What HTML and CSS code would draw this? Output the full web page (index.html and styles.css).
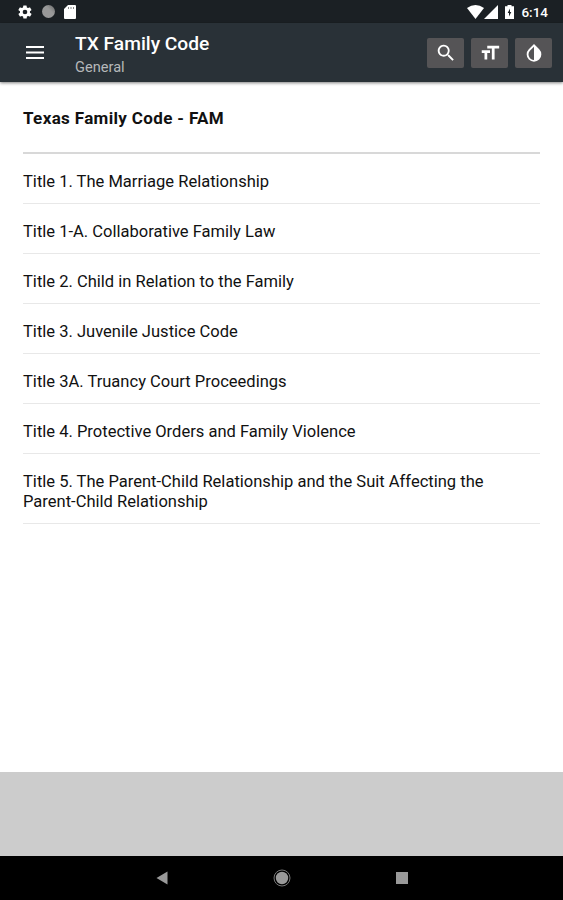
FILE: index.html
```
<!DOCTYPE html>
<html lang="en">
  <head>
    <meta charset="UTF-8" />
    <meta name="viewport" content="width=device-width, initial-scale=1.0" />
    <title>TX Family Code</title>
    <link rel="stylesheet" href="styles.css">
  </head>
  <body>
    <div class="status-bar">
      <div class="status-left">
        <svg width="16" height="16" viewBox="0 0 24 24"><path fill="#fff" fill-rule="evenodd" d="M19.4 13a7.500 7.500 0 0 0 0-2l2.100-1.600a.5.5 0 0 0 .1-.6l-2-3.500a.5.5 0 0 0-.6-.2l-2.500 1a7.300 7.300 0 0 0-1.700-1l-.4-2.600a.5.5 0 0 0-.5-.4h-4a.5.5 0 0 0-.5.4L9 5.100a7.700 7.700 0 0 0-1.700 1l-2.500-1a.5.5 0 0 0-.6.2l-2 3.500a.5.5 0 0 0 .1.600L4.500 11a8 8 0 0 0 0 2l-2.100 1.600a.5.5 0 0 0-.1.600l2 3.500c.1.200.4.300.6.200l2.500-1a7.300 7.300 0 0 0 1.700 1l.4 2.600c0 .3.200.4.500.4h4c.3 0 .5-.2.5-.4l.4-2.600a7.700 7.700 0 0 0 1.700-1l2.500 1c.2.100.5 0 .6-.2l2-3.500a.5.5 0 0 0-.1-.6zM12 15.500a3.500 3.500 0 1 1 0-7 3.500 3.500 0 0 1 0 7z"/></svg>
        <span class="sync-dot"></span>
        <svg width="12" height="14" viewBox="0 0 12 14"><path fill="#fff" d="M4 0h7a1 1 0 0 1 1 1v12a1 1 0 0 1-1 1H1a1 1 0 0 1-1-1V4z"/><path stroke="#888" d="M4.500 2v2M7 2v2M9.500 2v2"/></svg>
      </div>
      <div class="status-right">
        <svg width="17" height="14" viewBox="0 0 17 14"><path fill="#fff" d="M0 3Q8.500-3 17 3L8.500 14z"/></svg>
        <svg width="14" height="14" viewBox="0 0 14 14"><path fill="#fff" d="M14 0v14H0z"/></svg>
        <svg class="battery" width="9" height="14" viewBox="0 0 9 14"><path fill="#fff" d="M2.500 0h4v1.200H9V14H0V1.200h2.500z"/><path fill="#1b2024" d="M5 3.500L2.700 8H4v3.500L6.300 7H5z"/></svg>
        <span class="clock">6:14</span>
      </div>
    </div>

    <header class="toolbar">
      <button class="menu-button" aria-label="Menu"><svg width="18" height="13" viewBox="0 0 18 13"><path fill="#fff" d="M0 0h18v2H0zM0 5.500h18v2H0zM0 11h18v2H0z"/></svg></button>
      <div class="heading">
        <div class="app-title">TX Family Code</div>
        <div class="app-subtitle">General</div>
      </div>
      <div class="actions">
        <button class="action" aria-label="Search"><svg width="22" height="22" viewBox="0 0 24 24"><path fill="#fff" d="M15.500 14h-.8l-.3-.3A6.500 6.500 0 1 0 13.700 14.400l.3.300v.8l5 5 1.500-1.500zm-6 0a4.500 4.500 0 1 1 0-9 4.500 4.500 0 0 1 0 9z"/></svg></button>
        <button class="action" aria-label="Text size"><svg width="22" height="22" viewBox="0 0 24 24"><path fill="#fff" d="M9 4v3h5v12h3V7h5V4zM3 12h3v7h3v-7h3V9H3z"/></svg></button>
        <button class="action" aria-label="Invert colors"><svg width="22" height="22" viewBox="0 0 24 24"><path fill="#fff" d="M17.700 7.900L12 2.200 6.300 7.900a8 8 0 1 0 11.400 0zM12 19.600a6 6 0 0 1-4.200-10.200L12 5.100z"/></svg></button>
      </div>
    </header>

    <main class="content">
      <h1>Texas Family Code - FAM</h1>
      <ul class="titles">
        <li>Title 1. The Marriage Relationship</li>
        <li>Title 1-A. Collaborative Family Law</li>
        <li>Title 2. Child in Relation to the Family</li>
        <li>Title 3. Juvenile Justice Code</li>
        <li>Title 3A. Truancy Court Proceedings</li>
        <li>Title 4. Protective Orders and Family Violence</li>
        <li>Title 5. The Parent-Child Relationship and the Suit Affecting the <span class="nowrap">Parent-Child</span> Relationship</li>
      </ul>
    </main>

    <div class="ad-banner"></div>

    <nav class="nav-bar">
      <svg width="120" height="20" viewBox="0 0 120 20"><path fill="#999" d="M65.500 3.500v13L54.500 10z"/></svg>
      <svg width="120" height="20" viewBox="0 0 120 20"><circle cx="60" cy="10" r="8" fill="none" stroke="#777"/><circle cx="60" cy="10" r="6.200" fill="#999"/></svg>
      <svg width="120" height="20" viewBox="0 0 120 20"><path fill="#999" d="M54 4h12v12H54z"/></svg>
    </nav>
  </body>
</html>
```
FILE: styles.css
```
* {
  box-sizing: border-box;
}
body {
  margin: 0;
  height: 900px;
  display: flex;
  flex-direction: column;
  background: #fff;
  color: #111;
  font-family: Roboto, sans-serif;
}
svg {
  display: block;
}
button {
  border: 0;
  padding: 0;
  background: none;
}
.status-bar {
  height: 23px;
  padding: 0 15px 0 17px;
  display: flex;
  justify-content: space-between;
  background: #1b2024;
}
.status-left,
.status-right {
  display: flex;
  align-items: center;
}
.status-left {
  gap: 9px;
}
.sync-dot {
  width: 13px;
  height: 13px;
  border-radius: 50%;
  background: linear-gradient(45deg, #999 60%, #666);
}
.battery {
  margin-left: 7px;
}
.clock {
  margin-left: 7px;
  color: #fff;
  font-size: 13.5px;
  font-weight: 500;
}
.toolbar {
  height: 59px;
  padding: 0 11px 0 26px;
  display: flex;
  align-items: center;
  background: #293137;
  box-shadow: 0 1px 3px rgba(0, 0, 0, 0.5);
}
.heading {
  margin-left: 31px;
  padding-top: 5px;
  color: #fff;
}
.app-title {
  font-size: 19.2px;
  font-weight: 500;
  line-height: 24px;
}
.app-subtitle {
  color: #b5b8ba;
  font-size: 14.6px;
  line-height: 23px;
}
.actions {
  margin-left: auto;
  display: flex;
  gap: 7px;
}
.action {
  width: 37px;
  height: 30px;
  display: flex;
  align-items: center;
  justify-content: center;
  border-radius: 2px;
  background: #555456;
}
.content {
  flex: 1;
  padding: 0 23px;
}
h1 {
  margin: 0;
  height: 72px;
  padding-top: 26px;
  border-bottom: 2px solid #d8d8d8;
  font-size: 17px;
  font-weight: 700;
  line-height: 20px;
  letter-spacing: 0.35px;
}
.titles {
  margin: 0;
  padding: 0;
  list-style: none;
}
.titles li {
  padding: 18px 0 11px;
  border-bottom: 1px solid #e8e8e8;
  font-size: 16.55px;
  line-height: 20px;
}
.nowrap {
  white-space: nowrap;
}
.ad-banner {
  height: 84px;
  background: #ccc;
}
.nav-bar {
  height: 44px;
  display: flex;
  align-items: center;
  justify-content: center;
  background: #000;
}
```
